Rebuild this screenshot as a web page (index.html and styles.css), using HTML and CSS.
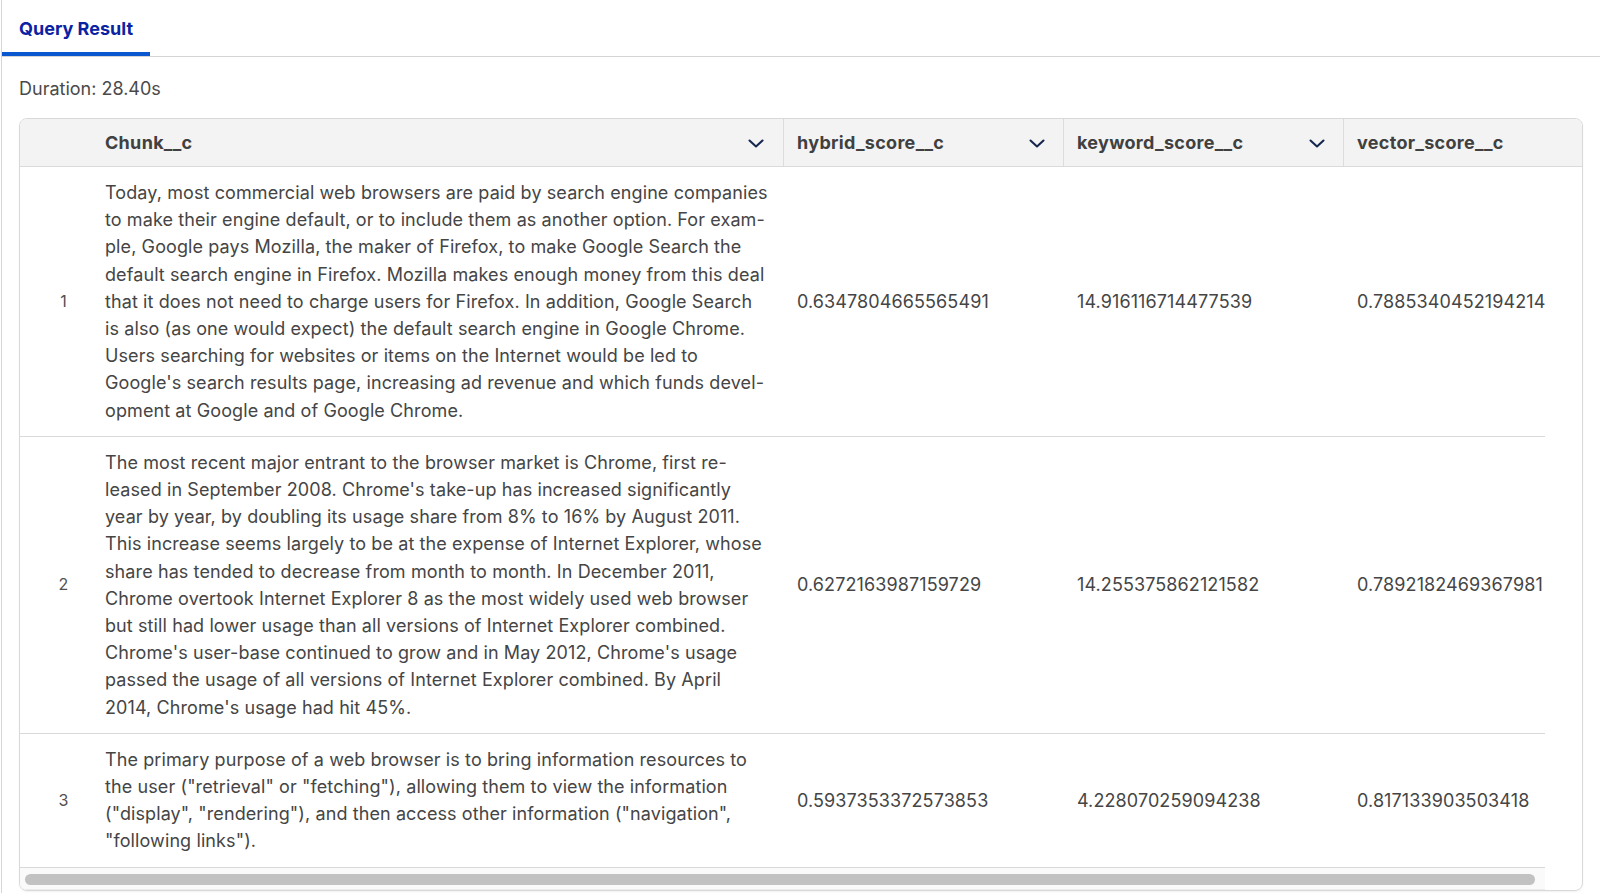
FILE: index.html
```html
<!DOCTYPE html>
<html lang="en">
<head>
<meta charset="utf-8">
<title>Query Result</title>
<link rel="stylesheet" href="styles.css">
</head>
<body>
<div class="panel">
  <div class="tabs">
    <div class="tab tab-active">Query Result</div>
  </div>
  <div class="content">
    <div class="duration">Duration: 28.40s</div>
    <div class="card">
      <div class="row head">
        <div class="cell num"></div>
        <div class="cell chunk"><span>Chunk__c</span><svg class="chev" viewBox="0 0 18 18" width="18" height="18"><path d="M2.5 6.5 9 12.5 15.5 6.5"/></svg></div>
        <div class="cell score"><span>hybrid_score__c</span><svg class="chev" viewBox="0 0 18 18" width="18" height="18"><path d="M2.5 6.5 9 12.5 15.5 6.5"/></svg></div>
        <div class="cell score"><span>keyword_score__c</span><svg class="chev" viewBox="0 0 18 18" width="18" height="18"><path d="M2.5 6.5 9 12.5 15.5 6.5"/></svg></div>
        <div class="cell score"><span>vector_score__c</span><svg class="chev" viewBox="0 0 18 18" width="18" height="18"><path d="M2.5 6.5 9 12.5 15.5 6.5"/></svg></div>
      </div>
      <div class="body">
        <div class="row">
          <div class="cell num">1</div>
          <div class="cell chunk">Today, most commercial web browsers are paid by search engine companies<br>to make their engine default, or to include them as another option. For exam-<br>ple, Google pays Mozilla, the maker of Firefox, to make Google Search the<br>default search engine in Firefox. Mozilla makes enough money from this deal<br>that it does not need to charge users for Firefox. In addition, Google Search<br>is also (as one would expect) the default search engine in Google Chrome.<br>Users searching for websites or items on the Internet would be led to<br>Google's search results page, increasing ad revenue and which funds devel-<br>opment at Google and of Google Chrome.</div>
          <div class="cell score">0.6347804665565491</div>
          <div class="cell score">14.916116714477539</div>
          <div class="cell score">0.7885340452194214</div>
        </div>
        <div class="row">
          <div class="cell num">2</div>
          <div class="cell chunk">The most recent major entrant to the browser market is Chrome, first re-<br>leased in September 2008. Chrome's take-up has increased significantly<br>year by year, by doubling its usage share from 8% to 16% by August 2011.<br>This increase seems largely to be at the expense of Internet Explorer, whose<br>share has tended to decrease from month to month. In December 2011,<br>Chrome overtook Internet Explorer 8 as the most widely used web browser<br>but still had lower usage than all versions of Internet Explorer combined.<br>Chrome's user-base continued to grow and in May 2012, Chrome's usage<br>passed the usage of all versions of Internet Explorer combined. By April<br>2014, Chrome's usage had hit 45%.</div>
          <div class="cell score">0.6272163987159729</div>
          <div class="cell score">14.255375862121582</div>
          <div class="cell score">0.7892182469367981</div>
        </div>
        <div class="row">
          <div class="cell num">3</div>
          <div class="cell chunk">The primary purpose of a web browser is to bring information resources to<br>the user ("retrieval" or "fetching"), allowing them to view the information<br>("display", "rendering"), and then access other information ("navigation",<br>"following links").</div>
          <div class="cell score">0.5937353372573853</div>
          <div class="cell score">4.228070259094238</div>
          <div class="cell score">0.817133903503418</div>
        </div>
      </div>
      <div class="hscroll"><div class="thumb"></div></div>
    </div>
  </div>
</div>
</body>
</html>
```

FILE: styles.css
```css
* { box-sizing: border-box; }
html, body { margin: 0; padding: 0; background: #fff; }
body {
  font-family: Inter, "Noto Sans", "Liberation Sans", sans-serif;
  color: #444;
  overflow: hidden;
}
.panel {
  margin-left: 1px;
  border-left: 1px solid #d6d6d6;
  height: 893px;
}
.tabs {
  display: flex;
  border-bottom: 1px solid #d4d4d4;
  height: 57px;
}
.tab {
  height: 56px;
  padding: 17px 17px 0 17px;
  font-size: 18px;
  line-height: 24px;
  font-weight: 700;
  color: #0b22a3;
  border-bottom: 4px solid #0b57d0;
  width: 148px;
  white-space: nowrap;
}
.content {
  padding: 20px 17px 0 17px;
}
.duration {
  font-size: 18px;
  line-height: 24px;
  color: #4a4a4a;
}
.card {
  margin-top: 17px;
  border: 1px solid #d9d9d9;
  border-radius: 8px;
  overflow: hidden;
  box-shadow: 0 1px 2px rgba(0,0,0,0.06);
}
.row {
  display: grid;
  grid-template-columns: 73px 690px 280px 280px 280px;
  width: 1603px;
}
.head {
  height: 48px;
  background: #f3f3f3;
  border-bottom: 1px solid #dadada;
  font-weight: 700;
  font-size: 18px;
  letter-spacing: 0.3px;
  color: #404040;
}
.head .cell {
  display: flex;
  align-items: center;
  justify-content: space-between;
  padding-right: 17px;
}
.head .cell.chunk { padding-right: 18px; }
.head .score { border-left: 1px solid #dcdcdc; }
.chev {
  fill: none;
  stroke: #16284f;
  stroke-width: 2.1;
  stroke-linecap: round;
  stroke-linejoin: round;
  flex: none;
}
.body {
  margin-right: 37px;
  overflow: hidden;
}
.body .row {
  border-bottom: 1px solid #d9d9d9;
  font-size: 18px;
  letter-spacing: 0.1px;
  line-height: 27.2px;
  color: #454545;
}
.body .cell {
  padding-top: 12px;
  padding-bottom: 12px;
  display: flex;
  align-items: center;
}
.body .chunk { display: block; white-space: nowrap; }
.body .score { border-left: 1px solid transparent; white-space: nowrap; }
.cell.num {
  justify-content: center;
  padding-left: 14px;
  font-size: 16px;
  color: #505050;
}
.cell.chunk { padding-left: 12px; padding-right: 12px; }
.cell.score { padding-left: 13px; }
.hscroll {
  margin-right: 37px;
  height: 22px;
  padding: 6px 10px 0 5px;
  background: #fafafa;
  border-bottom: 1px solid #ececec;
}
.thumb {
  height: 11px;
  border-radius: 6px;
  background: #c2c2c2;
}
```
